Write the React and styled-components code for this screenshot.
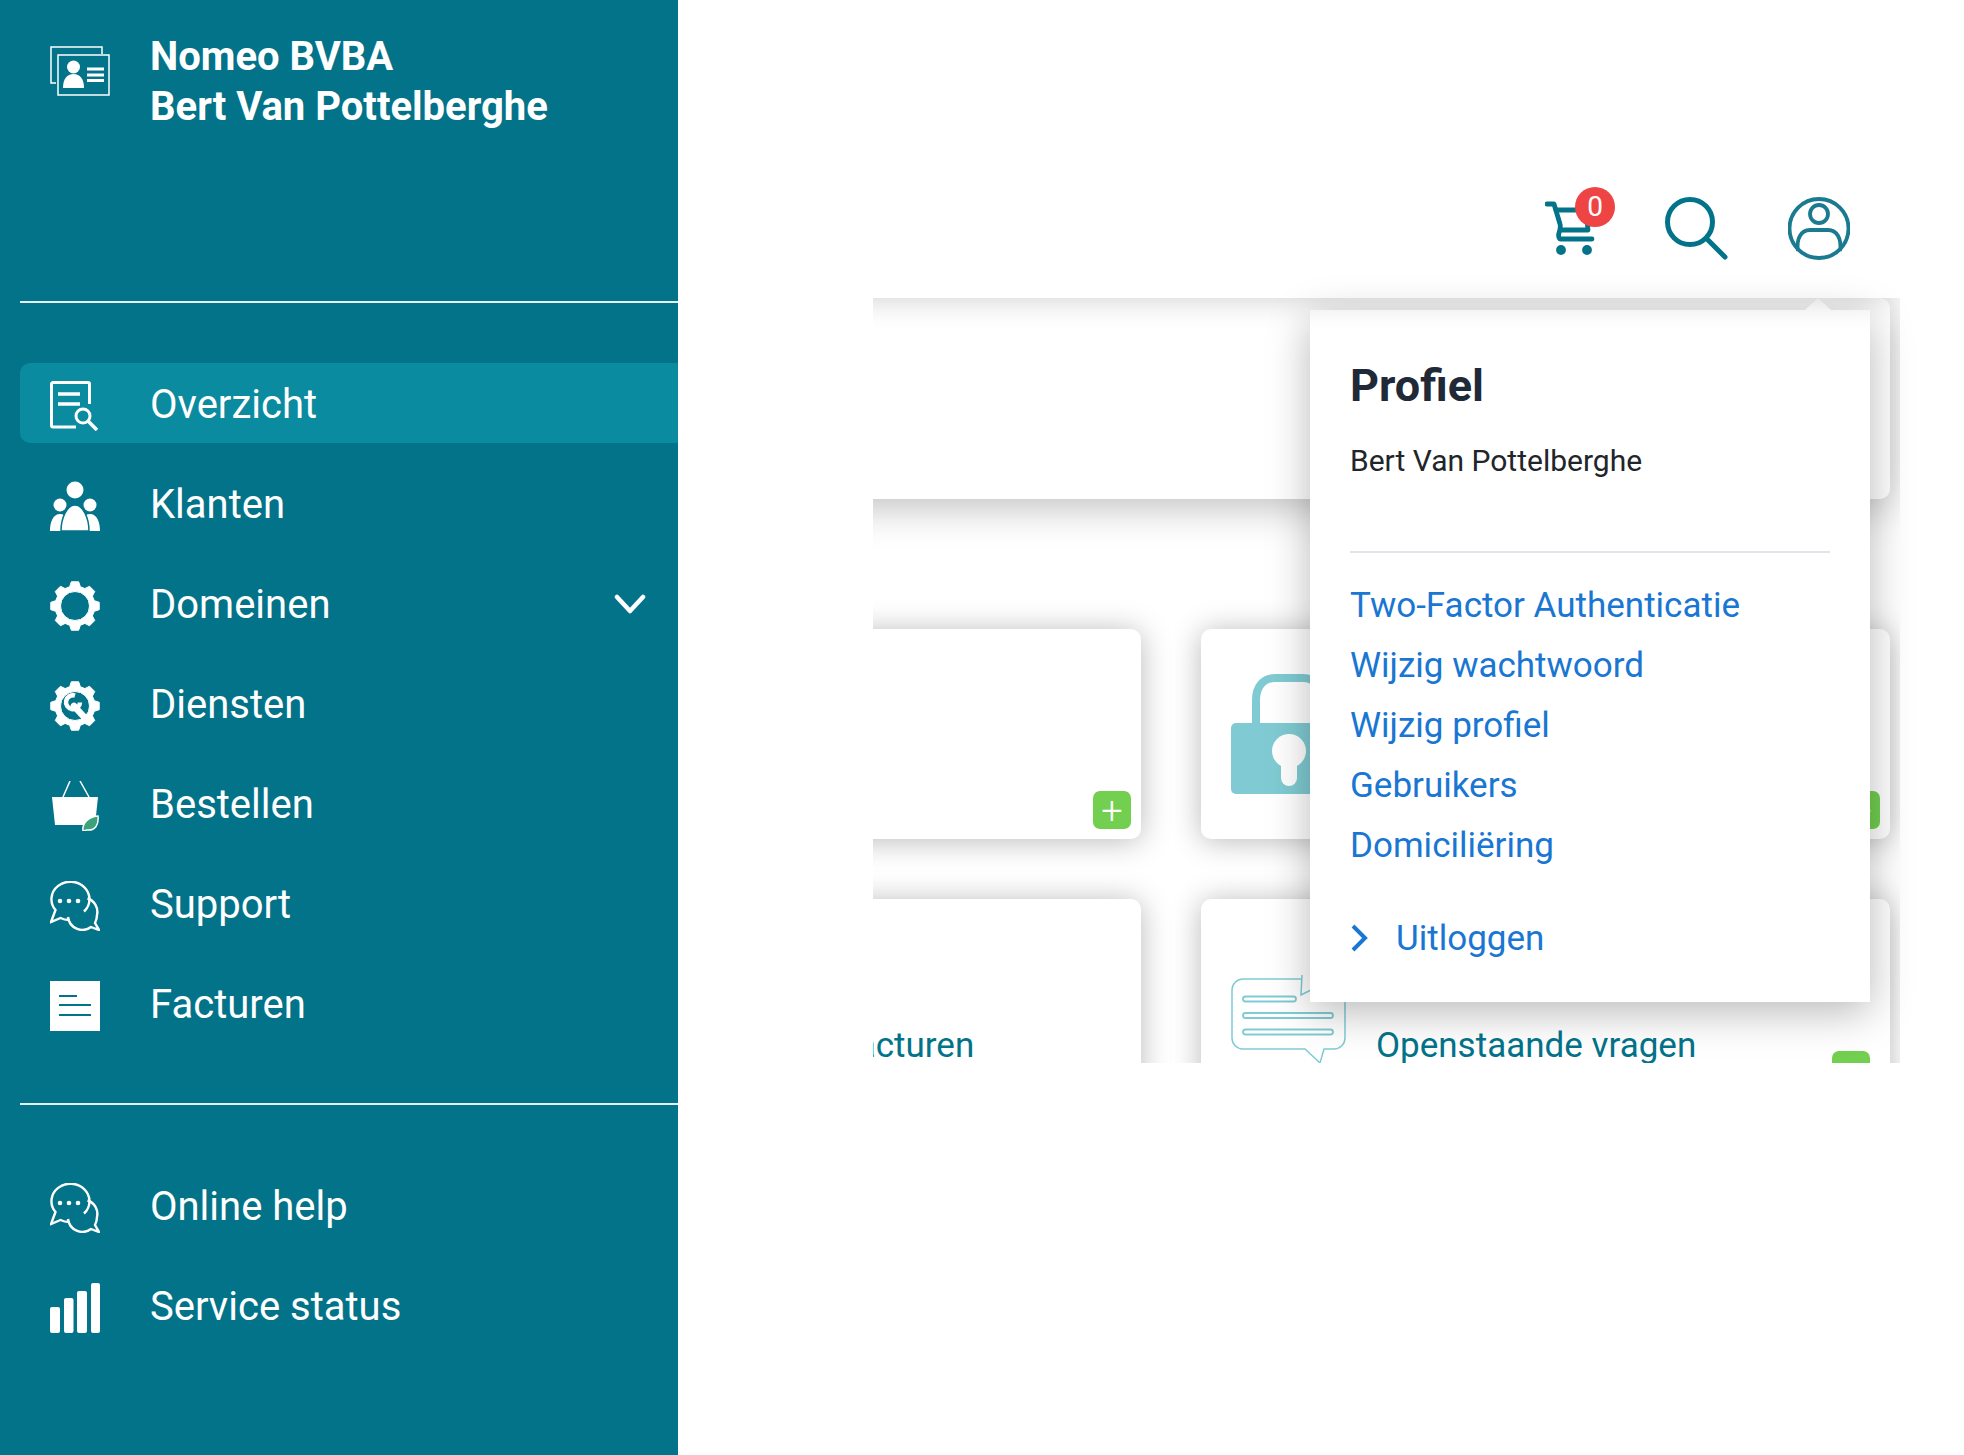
import React from "react";
import styled, { createGlobalStyle } from "styled-components";

const TEAL = "#03738a";
const LIGHT_TEAL = "#80cbd3";
const BLUE = "#1976d2";

const gearPath = () => {
  let d = "";
  for (let i = 0; i < 8; i++) {
    const a = (i * Math.PI) / 4 - Math.PI / 2;
    const pts = [
      [20, a - 0.27],
      [24.5, a - 0.15],
      [24.5, a + 0.15],
      [20, a + 0.27],
    ];
    pts.forEach(([r, t], j) => {
      const x = (25 + r * Math.cos(t)).toFixed(2);
      const y = (25 + r * Math.sin(t)).toFixed(2);
      d += `${i === 0 && j === 0 ? "M" : "L"}${x} ${y}`;
    });
  }
  return d + "Z M25 10.5 A14.5 14.5 0 1 0 25 39.5 A14.5 14.5 0 1 0 25 10.5Z";
};

const Gear = ({ children }) => (
  <svg width="50" height="50" viewBox="0 0 50 50">
    <path d={gearPath()} fill="#fff" fillRule="evenodd" stroke="#fff" strokeLinejoin="round" />
    {children}
  </svg>
);

const OverzichtIcon = () => (
  <svg width="50" height="50" viewBox="0 0 50 50" fill="none" stroke="#fff">
    <path d="M26 46H3a1.5 1.5 0 0 1-1.5-1.5V3A1.5 1.5 0 0 1 3 1.5h35A1.5 1.5 0 0 1 39.500 3v20" strokeWidth="3" />
    <path d="M8 13h22M8 23h22" strokeWidth="3.500" />
    <circle cx="33" cy="35" r="7" strokeWidth="3" />
    <path d="M38 40l9 9" strokeWidth="3.500" />
  </svg>
);

const KlantenIcon = () => (
  <svg width="50" height="50" viewBox="0 0 50 50" fill="#fff">
    <circle cx="25" cy="9" r="8.500" />
    <circle cx="10" cy="24" r="6.500" />
    <circle cx="40" cy="24" r="6.500" />
    <path d="M0 50c0-9 3-17 10-17s10 8 10 17zM30 50c0-9 3-17 10-17s10 8 10 17z" />
    <path d="M11 50c0-13 6-26 14-26s14 13 14 26z" stroke={TEAL} strokeWidth="1.500" />
  </svg>
);

const DomeinenIcon = () => <Gear />;

const DienstenIcon = () => (
  <Gear>
    <path d="M25 14.500a7 7 0 1 0 5 7" fill="none" stroke="#fff" strokeWidth="4.500" />
    <path d="M24 25l11 12" stroke="#fff" strokeWidth="6.500" strokeLinecap="round" />
  </Gear>
);

const BasketIcon = () => (
  <svg width="50" height="50" viewBox="0 0 50 50">
    <path d="M2 16h46l-3 28H5z" fill="#fff" />
    <path d="M20 0l-7 16M30 0l9 16" stroke="#fff" strokeWidth="1.500" fill="none" />
    <path d="M33 50c-1-8 5-14 15-15 1 9-3 15-11 14z" fill="#3aa37a" stroke="#fff" strokeWidth="1.500" />
  </svg>
);

const ChatIcon = () => (
  <svg width="50" height="50" viewBox="0 0 50 50" fill="none" stroke="#fff" strokeWidth="2.400">
    <path d="M34 30.500A19 17.500 0 1 0 5.500 29L1 41l9.500-4A19 19 0 0 0 19.500 39" />
    <path d="M37.500 17.500A14 14 0 0 1 47 34c0 3-1 6-2 8l4 7-8-3a14.500 14.500 0 0 1-23-10" />
    <g fill="#fff" stroke="none">
      <circle cx="10" cy="20" r="2.300" />
      <circle cx="19" cy="20" r="2.300" />
      <circle cx="28" cy="20" r="2.300" />
    </g>
  </svg>
);

const FacturenIcon = () => (
  <svg width="50" height="50" viewBox="0 0 50 50">
    <rect width="50" height="50" fill="#fff" />
    <path d="M9 15h18M9 24h32M9 34h32" stroke={TEAL} strokeWidth="2" />
  </svg>
);

const StatusIcon = () => (
  <svg width="50" height="50" viewBox="0 0 50 50" fill="#fff">
    <rect x="0" y="24" width="10" height="26" rx="2" />
    <rect x="14" y="15" width="9.500" height="35" rx="2" />
    <rect x="27" y="8" width="10" height="42" rx="2" />
    <rect x="41" y="0" width="9" height="50" rx="2" />
  </svg>
);

const CardsIcon = () => (
  <svg width="60" height="50" viewBox="0 0 60 50" fill="none" stroke="#fff" strokeWidth="1.500">
    <path d="M6 37H1V1h51v7" />
    <rect x="8" y="9" width="51" height="40" />
    <circle cx="23.500" cy="21" r="6.500" fill="#fff" stroke="none" />
    <path d="M13 42c0-9 4-14 10.500-14S34 33 34 42z" fill="#fff" stroke="none" />
    <path d="M37 23h17M37 29h17M37 34.500h17" strokeWidth="3" />
  </svg>
);

const CartIcon = () => (
  <svg width="50" height="60" viewBox="0 0 50 60" fill="none" stroke={TEAL} strokeWidth="4.800" strokeLinecap="round" strokeLinejoin="round">
    <path d="M2 7h7l6 20c1 3 0 6-1 9-1 3 0 6 2 6h31" />
    <path d="M11 13h30l2 20H17" />
    <circle cx="16" cy="53" r="4.900" fill={TEAL} stroke="none" />
    <circle cx="42" cy="53" r="4.900" fill={TEAL} stroke="none" />
  </svg>
);

const SearchIcon = () => (
  <svg width="63" height="63" viewBox="0 0 63 63" fill="none" stroke={TEAL} strokeWidth="5" strokeLinecap="round">
    <circle cx="25" cy="25" r="22.500" />
    <path d="M43 43l17 17" />
  </svg>
);

const UserIcon = () => (
  <svg width="62" height="63" viewBox="0 0 62 63" fill="none" stroke="#1a7a90" strokeWidth="3.800">
    <circle cx="31" cy="31.500" r="29.500" />
    <circle cx="31" cy="17" r="9" />
    <path d="M10 54C8 42 13 33 22 33h18c9 0 14 9 12 21" />
  </svg>
);

const LockIcon = () => (
  <svg width="116" height="120" viewBox="0 0 116 120">
    <path d="M25 52V26C25 13 32 4 44 4h28c12 0 19 9 19 22v26" fill="none" stroke={LIGHT_TEAL} strokeWidth="8" />
    <rect x="0" y="49" width="116" height="71" rx="5" fill={LIGHT_TEAL} />
    <circle cx="58" cy="77" r="17" fill="#fff" />
    <path d="M50 85h16v19a8 8 0 0 1-16 0z" fill="#fff" />
  </svg>
);

const QuestionsIcon = () => (
  <svg width="116" height="90" viewBox="0 0 116 90" fill="none" stroke={LIGHT_TEAL} strokeWidth="1.500">
    <path d="M70 4H12A11 11 0 0 0 1 15v48a11 11 0 0 0 11 11h62l15 14 4-14h10a11 11 0 0 0 11-11V15A11 11 0 0 0 104 4H87" />
    <path d="M71 0l-1 20 10-5" />
    <rect x="12" y="21.500" width="53" height="5" rx="2.500" strokeWidth="1.800" />
    <rect x="12" y="38" width="90" height="5" rx="2.500" strokeWidth="1.800" />
    <rect x="12" y="54.500" width="90" height="5" rx="2.500" strokeWidth="1.800" />
  </svg>
);

const GlobalStyle = createGlobalStyle`
  html, body {
    margin: 0;
    padding: 0;
    height: 100%;
    background: #fff;
    overflow: hidden;
  }
  body {
    font-family: Roboto, "Liberation Sans", sans-serif;
  }
  * {
    box-sizing: border-box;
  }
`;

const Page = styled.div`
  display: flex;
  width: 1964px;
  height: 1455px;
`;

// Sidebar
const Sidebar = styled.aside`
  width: 678px;
  height: 100%;
  flex-shrink: 0;
  background: ${TEAL};
  color: #fff;
  padding-left: 20px;
`;

const Account = styled.div`
  display: flex;
  height: 301px;
  padding: 32px 0 0 30px;
`;

const AccountIconBox = styled.div`
  width: 100px;
  padding-top: 14px;
`;

const AccountName = styled.div`
  font-size: 40px;
  line-height: 50px;
  font-weight: 700;
`;

const Divider = styled.hr`
  height: 2px;
  margin: 0 0 60px;
  border: 0;
  background: #e6f1f3;
`;

const NavList = styled.nav`
  display: flex;
  flex-direction: column;
  gap: 20px;
  margin-bottom: 60px;
`;

const NavRow = styled.a`
  display: flex;
  align-items: center;
  height: 80px;
  padding: 0 32px 0 30px;
  font-size: 40px;
  font-weight: 400;
  border-radius: 10px 0 0 10px;
  background: ${(p) => (p.$active ? "#0b8ba0" : "transparent")};
`;

const NavIcon = styled.span`
  display: block;
  width: 100px;
  height: 50px;
  margin-top: 6px;
  flex-shrink: 0;
`;

const NavLabel = styled.span`
  flex: 1;
  padding-top: 2px;
`;

const ExpandIcon = styled.svg`
  margin-top: 2px;
`;

// Main
const Main = styled.main`
  position: relative;
  flex: 1;
`;

const TopBar = styled.header`
  display: flex;
  justify-content: flex-end;
  gap: 60px;
  height: 298px;
  padding: 197px 114px 0 0;
`;

const CartButton = styled.div`
  position: relative;
  width: 60px;
`;

const CartBadge = styled.span`
  position: absolute;
  top: -10px;
  left: 30px;
  width: 40px;
  height: 40px;
  border-radius: 50%;
  background: #ef4444;
  color: #fff;
  font-size: 28px;
  line-height: 40px;
  text-align: center;
`;

const Content = styled.div`
  width: 1027px;
  height: 765px;
  margin-left: 195px;
  overflow: hidden;
`;

const ContentInner = styled.div`
  width: 1438px;
  margin-left: -421px;
`;

const TopEdge = styled.div`
  position: relative;
  z-index: 1;
  height: 100px;
  margin-top: -100px;
  box-shadow: 0 0 30px rgba(0, 0, 0, 0.2);
`;

const Card = styled.div`
  position: relative;
  background: #fff;
  border-radius: 10px;
  box-shadow: 0 2px 30px rgba(0, 0, 0, 0.28);
`;

const WideCard = styled(Card)`
  height: 201px;
  margin: 0 0 130px;
  box-shadow: 0 8px 40px rgba(0, 0, 0, 0.26);
`;

const CardGrid = styled.div`
  display: grid;
  grid-template-columns: 689px 689px;
  gap: 60px;
`;

const Tile = styled(Card)`
  display: flex;
  align-items: flex-start;
  gap: 29px;
  height: ${(p) => p.$height}px;
  padding: ${(p) => p.$pad}px 0 0 30px;
`;

const IconSpace = styled.span`
  width: 118px;
  flex-shrink: 0;
`;

const TileTitle = styled.div`
  margin-top: 46px;
  font-size: 35px;
  line-height: 50px;
  color: ${TEAL};
  white-space: nowrap;
`;

const AddButton = styled.span`
  position: absolute;
  top: ${(p) => p.$top}px;
  right: ${(p) => p.$right}px;
  width: 38px;
  height: 38px;
  border-radius: 7px;
  background: #72cf50;
  color: #fff;
  font-size: 38px;
  font-weight: 300;
  line-height: 41px;
  text-align: center;
`;

// Profile popover
const Popover = styled.div`
  position: absolute;
  top: 310px;
  right: 94px;
  width: 560px;
  height: 692px;
  padding: 51px 40px 0;
  background: #fff;
  box-shadow: 0 10px 40px rgba(0, 0, 0, 0.28);
  &::before {
    content: "";
    position: absolute;
    top: -12px;
    right: 39px;
    border-left: 13px solid transparent;
    border-right: 13px solid transparent;
    border-bottom: 12px solid #fff;
  }
`;

const PopoverTitle = styled.h2`
  margin: 0;
  font-size: 45px;
  line-height: 50px;
  font-weight: 700;
  color: #1f2937;
`;

const PopoverName = styled.p`
  margin: 30px 0 0;
  font-size: 30px;
  line-height: 40px;
  color: #212529;
`;

const PopoverDivider = styled.hr`
  height: 2px;
  margin: 70px 0 23px;
  border: 0;
  background: #e2e4ea;
`;

const LinkList = styled.div`
  display: flex;
  flex-direction: column;
`;

const ProfileLink = styled.a`
  font-size: 35px;
  line-height: 60px;
  color: ${BLUE};
`;

const LogoutRow = styled.a`
  display: flex;
  align-items: center;
  gap: 28px;
  margin-top: 33px;
  font-size: 35px;
  line-height: 60px;
  color: ${BLUE};
`;

const LogoutChevron = styled.svg`
  margin-bottom: 3px;
`;

const navTop = [
  { label: "Overzicht", Icon: OverzichtIcon, active: true },
  { label: "Klanten", Icon: KlantenIcon },
  { label: "Domeinen", Icon: DomeinenIcon, expand: true },
  { label: "Diensten", Icon: DienstenIcon },
  { label: "Bestellen", Icon: BasketIcon },
  { label: "Support", Icon: ChatIcon },
  { label: "Facturen", Icon: FacturenIcon },
];

const navBottom = [
  { label: "Online help", Icon: ChatIcon },
  { label: "Service status", Icon: StatusIcon },
];

const profileLinks = [
  "Two-Factor Authenticatie",
  "Wijzig wachtwoord",
  "Wijzig profiel",
  "Gebruikers",
  "Domiciliëring",
];

function NavItems({ items }) {
  return (
    <NavList>
      {items.map(({ label, Icon, active, expand }) => (
        <NavRow key={label} $active={active}>
          <NavIcon>
            <Icon />
          </NavIcon>
          <NavLabel>{label}</NavLabel>
          {expand && (
            <ExpandIcon width="32" height="20" viewBox="0 0 32 20" fill="none" stroke="#fff" strokeWidth="4.500" strokeLinecap="round" strokeLinejoin="round">
              <path d="M3 3l13 14L29 3" />
            </ExpandIcon>
          )}
        </NavRow>
      ))}
    </NavList>
  );
}

export default function App() {
  return (
    <Page>
      <GlobalStyle />
      <Sidebar>
        <Account>
          <AccountIconBox>
            <CardsIcon />
          </AccountIconBox>
          <AccountName>
            Nomeo BVBA
            <br />
            Bert Van Pottelberghe
          </AccountName>
        </Account>
        <Divider />
        <NavItems items={navTop} />
        <Divider />
        <NavItems items={navBottom} />
      </Sidebar>

      <Main>
        <TopBar>
          <CartButton>
            <CartIcon />
            <CartBadge>0</CartBadge>
          </CartButton>
          <SearchIcon />
          <UserIcon />
        </TopBar>

        <Content>
          <ContentInner>
            <TopEdge />
            <WideCard />
            <CardGrid>
              <Tile $height={210} $pad={45}>
                <AddButton $top={162} $right={10}>+</AddButton>
              </Tile>
              <Tile $height={210} $pad={45}>
                <LockIcon />
                <AddButton $top={162} $right={10}>+</AddButton>
              </Tile>
              <Tile $height={220} $pad={76}>
                <IconSpace />
                <TileTitle>Openstaande facturen</TileTitle>
              </Tile>
              <Tile $height={220} $pad={76}>
                <QuestionsIcon />
                <TileTitle>Openstaande vragen</TileTitle>
                <AddButton $top={152} $right={20} />
              </Tile>
            </CardGrid>
          </ContentInner>
        </Content>

        <Popover>
          <PopoverTitle>Profiel</PopoverTitle>
          <PopoverName>Bert Van Pottelberghe</PopoverName>
          <PopoverDivider />
          <LinkList>
            {profileLinks.map((link) => (
              <ProfileLink key={link}>{link}</ProfileLink>
            ))}
          </LinkList>
          <LogoutRow>
            <LogoutChevron width="18" height="28" viewBox="0 0 18 28" fill="none" stroke={BLUE} strokeWidth="4" strokeLinejoin="miter">
              <path d="M3 2l12 12L3 26" />
            </LogoutChevron>
            Uitloggen
          </LogoutRow>
        </Popover>
      </Main>
    </Page>
  );
}
